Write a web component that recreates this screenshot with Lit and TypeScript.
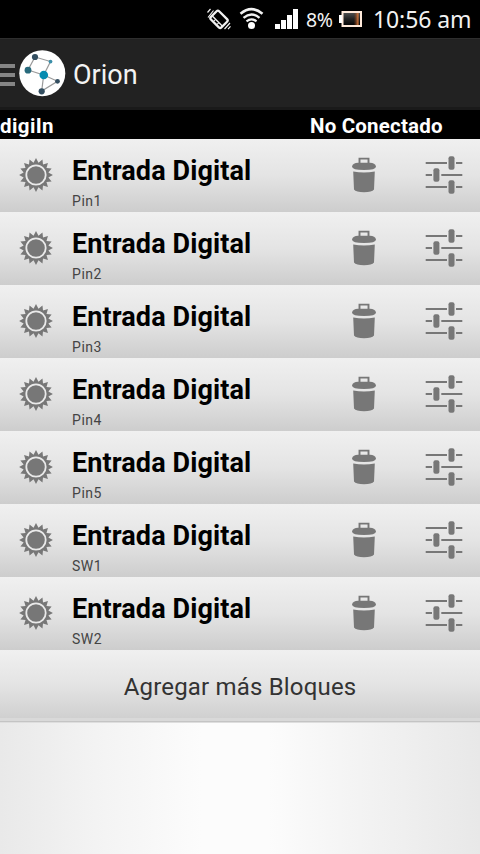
import { LitElement, html, css } from "lit";
import { customElement, property } from "lit/decorators.js";

const gearPoints = Array.from({ length: 32 }, (_, i) => {
  const r = i % 2 === 0 ? 16.9 : 12.6;
  const a = (i * Math.PI) / 16 - Math.PI / 2;
  return `${(18 + r * Math.cos(a)).toFixed(2)},${(18 + r * Math.sin(a)).toFixed(2)}`;
}).join(" ");

@customElement("status-bar")
class StatusBar extends LitElement {
  static styles = css`
    :host { display: flex; height: 38px; background: #000; color: #f2f2f2; font-family: "Noto Sans", "Open Sans", sans-serif; align-items: center; white-space: nowrap; }
    svg { display: block; flex: none; margin-left: 200px; }
    .battery { margin-left: 6px; }
    .pct { font-size: 19.5px; width: 27px; letter-spacing: -0.3px; margin-left: 6px; line-height: 38px; padding-top: 1px; }
    .time { font-size: 23px; margin-left: 10px; line-height: 38px; letter-spacing: -0.1px; }
  `;
  render() {
    return html`
      <svg width="100" height="38" viewBox="200 0 100 38">
        <g fill="none" stroke="#f2f2f2">
          <g transform="translate(219 19.3) rotate(-45)">
            <rect x="-5.8" y="-7.4" width="11.6" height="14.8" rx="1.8" stroke-width="2.3"/>
            <path d="M-2.4 -7v14" stroke-width="1.3"/>
            <path d="M-5 -2.3h2.4M-5 2.3h2.4" stroke-width="1"/>
          </g>
          <path d="M208 17.5l5.5-7M207.5 12.5l3-3.5M224.5 29l5.5-6M228 29.2l2.5-2.8" stroke-width="1.2"/>
          <path d="M240.5 13.8Q251.5 4.6 262.5 13.8" stroke-width="2.6"/>
          <path d="M243.5 17.8Q251.5 11 259.5 17.8" stroke-width="2.4"/>
          <path d="M246.5 21.3Q251.5 17.3 256.5 21.3" stroke-width="2.2"/>
        </g>
        <circle cx="251.5" cy="25.6" r="3.5" fill="#fff"/>
        <path d="M275 24h5v5h-5zM281 20h5v9h-5zM287 15h5v14h-5zM293 9h5v20h-5z" fill="#fff"/>
      </svg>
      <span class="pct">8%</span>
      <svg class="battery" width="24" height="38" viewBox="0 0 24 38">
        <defs>
          <linearGradient id="b" x1="0" y1="0" x2="0" y2="1"><stop offset="0" stop-color="#555"/><stop offset=".5" stop-color="#222"/><stop offset="1" stop-color="#000"/></linearGradient>
          <linearGradient id="c"><stop offset="0" stop-color="#6b3012" stop-opacity="0"/><stop offset="1" stop-color="#ef8440"/></linearGradient>
        </defs>
        <rect x="3.5" y="12" width="18.5" height="14" fill="url(#b)" stroke="#ffeadb" stroke-width="2"/>
        <rect x="14.5" y="13" width="5" height="12" fill="url(#c)"/>
        <rect x="0" y="15" width="3" height="8" fill="#fff"/>
      </svg>
      <span class="time">10:56 am</span>`;
  }
}

@customElement("action-bar")
class ActionBar extends LitElement {
  static styles = css`
    :host { display: flex; align-items: center; height: 72px; box-sizing: border-box; background: #222; border-top: 1px solid #2e2e2e; border-bottom: 3px solid #1a1a1a; color: #f3f3f3; }
    svg { display: block; flex: none; }
    .title { font: 27px/32px Roboto, sans-serif; margin-left: 6px; padding-top: 3px; }
  `;
  render() {
    return html`
      <svg width="67" height="68" viewBox="0 39 67 68">
        <path d="M0 64h15v4H0zM0 73h15v4H0zM0 82h15v4H0z" fill="#858585"/>
        <circle cx="42.3" cy="73.3" r="23" fill="#fff"/>
        <path d="M35 57L50.5 61.5L43.7 75L28 70ZM43.7 75L57.5 81.3L41.7 91Z" fill="none" stroke="#9a9a9a" stroke-width="1.2"/>
        <g fill="#334e60"><circle cx="35" cy="57" r="3.1"/><circle cx="41.7" cy="91.3" r="3.1"/><circle cx="57.5" cy="81.3" r="2.4"/></g>
        <circle cx="28" cy="70.2" r="3.4" fill="#286a7c"/>
        <circle cx="50.5" cy="61.6" r="1.9" fill="#3c8fa9"/>
        <circle cx="43.8" cy="75" r="4.3" fill="#078bb0"/>
      </svg>
      <span class="title">Orion</span>`;
  }
}

@customElement("block-row")
class BlockRow extends LitElement {
  @property() pin = "";
  static styles = css`
    :host { display: flex; height: 73px; background: linear-gradient(#f0f0f0, #e4e4e4 50%, #cdcdcd); font-family: Roboto, sans-serif; }
    svg { display: block; flex: none; margin-top: 18px; }
    .gear { margin-left: 18px; }
    .text { width: 276px; margin-left: 18px; }
    .name { font-size: 27px; line-height: 32px; font-weight: 700; letter-spacing: .1px; color: #000; margin-top: 16px; white-space: nowrap; }
    .pin { font-size: 14px; line-height: 16px; letter-spacing: .55px; color: #444; margin-top: 6px; }
    .sliders { margin-left: 44px; margin-top: 16px; }
  `;
  render() {
    return html`
      <svg class="gear" width="36" height="36" viewBox="0 0 36 36">
        <polygon points=${gearPoints} fill="#777"/>
        <circle cx="18" cy="18" r="9.7" fill="#777" stroke="#eaeaea" stroke-width="1.8"/>
      </svg>
      <div class="text"><div class="name">Entrada Digital</div><div class="pin">${this.pin}</div></div>
      <svg width="32" height="38" viewBox="348 157 32 38">
        <path d="M359.5 163.5v-4.9h9v4.9" fill="none" stroke="#777" stroke-width="1.9"/>
        <path d="M352 166.5Q353 162.8 358 162.8H370Q375 162.8 376 166.5Q376 170 364 170T352 166.5Z" fill="#777"/>
        <path d="M353.2 171.6Q364 173.3 374.8 171.6L374 189.5Q372 192.3 364 192.3T354 189.5Z" fill="#777"/>
      </svg>
      <svg class="sliders" width="40" height="42" viewBox="424 155 40 42">
        <path d="M425.7 163h21.3M456 163h6.3M425.7 175h6.3M441.3 175h21M425.7 187h21.3M456 187h6.3" stroke="#777" stroke-width="2"/>
        <g fill="#777"><rect x="448.5" y="156.3" width="6" height="13.4" rx="2"/><rect x="433.4" y="168.3" width="6" height="13.4" rx="2"/><rect x="448.5" y="180.3" width="6" height="13.4" rx="2"/></g>
      </svg>`;
  }
}

@customElement("app-root")
class AppRoot extends LitElement {
  static styles = css`
    :host { display: flex; flex-direction: column; height: 854px; width: 480px; overflow: hidden; font-family: Roboto, sans-serif; background: linear-gradient(90deg, #e9e9e9, #f4f4f4 22%, #fcfcfc 42%, #fcfcfc 56%, #f3f3f3 75%, #e8e8e8); }
    .heading { display: flex; height: 29px; background: #000; color: #fff; font-size: 20.5px; line-height: 32px; font-weight: 700; letter-spacing: .2px; }
    .heading > span:first-child { width: 310px; letter-spacing: .4px; }
    .add { height: 68px; background: linear-gradient(#f0f0f0, #e4e4e4 50%, #d0d0d0); color: #333; font-size: 24px; line-height: 74px; letter-spacing: .18px; text-align: center; }
    .rule { height: 5px; background: linear-gradient(#d9d9d9 60%, #c4c4c4 60% 80%, #dedede 80%); }
  `;
  render() {
    return html`
      <status-bar></status-bar>
      <action-bar></action-bar>
      <div class="heading"><span>digiIn</span><span>No Conectado</span></div>
      ${["Pin1", "Pin2", "Pin3", "Pin4", "Pin5", "SW1", "SW2"].map((p) => html`<block-row .pin=${p}></block-row>`)}
      <div class="add">Agregar más Bloques</div>
      <div class="rule"></div>`;
  }
}
